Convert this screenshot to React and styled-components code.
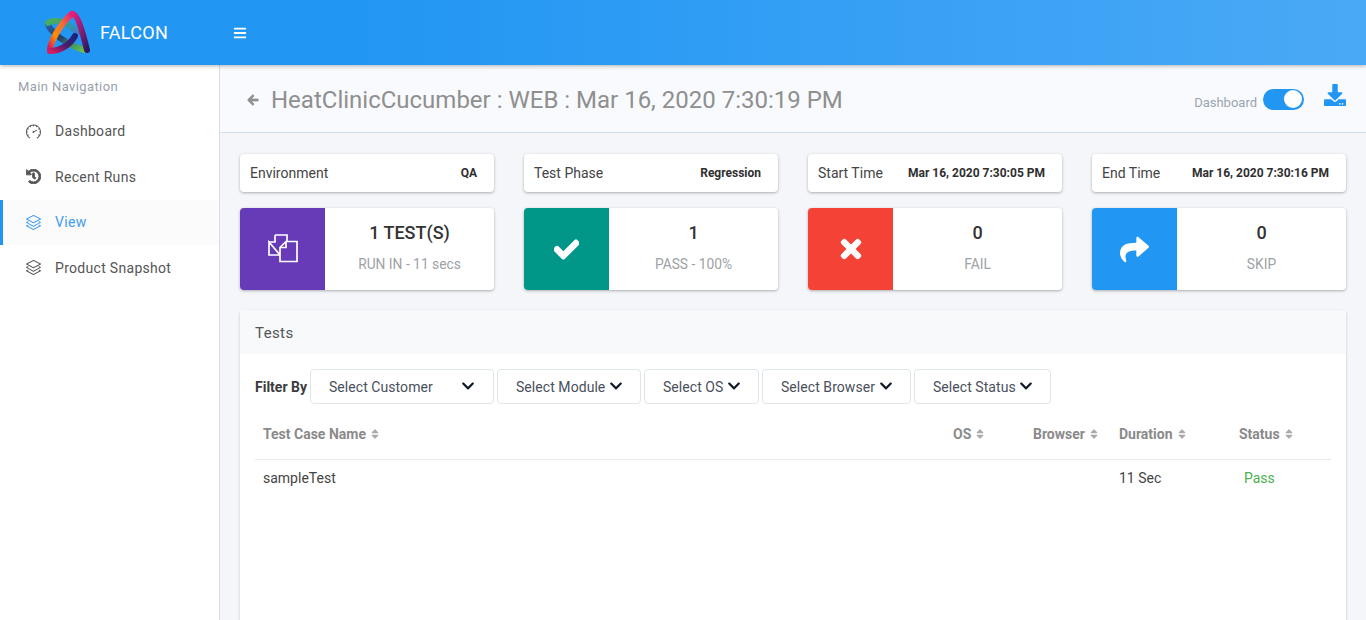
import React from "react";
import styled, { createGlobalStyle } from "styled-components";
import { FaArrowLeft, FaBars, FaCheck, FaChevronDown, FaDownload, FaHistory, FaShare, FaSort, FaTimes } from "react-icons/fa";
import { SlLayers, SlSpeedometer } from "react-icons/sl";

const GlobalStyle = createGlobalStyle`
  html, body { margin: 0; height: 100%; overflow: hidden; }
  body { font-family: Roboto, "Liberation Sans", sans-serif; background: #f4f6fa; color: #3a3a3a; }
  * { box-sizing: border-box; }
`;

const Page = styled.div`
  height: 620px;
  display: flex;
  flex-direction: column;
  overflow: hidden;
`;

const Header = styled.header`
  height: 65px;
  flex: none;
  display: flex;
  align-items: center;
  position: relative;
  z-index: 2;
  color: #fff;
  background: linear-gradient(90deg, #2196f3 0%, #2196f3 25%, #4aa9f6 100%);
  box-shadow: 0 1px 4px rgba(0, 0, 0, 0.3);
`;

const Brand = styled.div`
  width: 233px;
  padding-left: 44px;
  display: flex;
  align-items: center;
  gap: 10px;
  font-size: 18px;
  letter-spacing: 0.3px;
`;

const Body = styled.div`
  flex: 1;
  display: flex;
  min-height: 0;
`;

const Sidebar = styled.aside`
  width: 220px;
  flex: none;
  background: #fff;
  border-right: 1px solid #d8dde3;
  padding-top: 14px;
`;

const NavTitle = styled.div`
  font-size: 13px;
  line-height: 16px;
  padding-left: 18px;
  margin-bottom: 13.5px;
  color: #9aa1ab;
  letter-spacing: 0.4px;
`;

const NavItem = styled.div`
  height: 45.5px;
  display: flex;
  align-items: center;
  gap: 14px;
  padding-left: ${(p) => (p.$active ? "23px" : "26px")};
  font-size: 14px;
  letter-spacing: 0.3px;
  color: ${(p) => (p.$active ? "#3f9bf0" : "#555")};
  background: ${(p) => (p.$active ? "#fbfbfc" : "transparent")};
  border-left: ${(p) => (p.$active ? "3px solid #2196f3" : "none")};
  svg { width: 15px; height: 15px; flex: none; }
`;

const HistoryIcon = styled(FaHistory)`
  stroke: currentColor;
  stroke-width: 30px;
`;

const Main = styled.main`
  flex: 1;
  min-width: 0;
`;

const TitleBar = styled.div`
  height: 68px;
  display: flex;
  align-items: center;
  padding: 0 20px 0 27px;
  background: #f9fafd;
  border-bottom: 1px solid #d3deea;
`;

const Title = styled.h1`
  flex: 1;
  margin: 2px 0 0;
  display: flex;
  align-items: center;
  gap: 12px;
  font-size: 24px;
  font-weight: 400;
  color: #8f8f8f;
  svg { width: 12px; height: 12px; stroke: currentColor; stroke-width: 40px; }
`;

const ToggleLabel = styled.span`
  font-size: 13px;
  color: #9aa5ae;
  margin: 7px 6px 0 0;
`;

const Toggle = styled.span`
  width: 41px;
  height: 21px;
  margin-top: 1px;
  border-radius: 11px;
  background: #2196f3;
  display: flex;
  justify-content: flex-end;
  padding: 1.5px 2px;
  span { width: 18px; height: 18px; border-radius: 50%; background: #fff; }
`;

const DownloadLink = styled.span`
  margin: -7px 0 0 20px;
  color: #2196f3;
  display: flex;
  svg { width: 22px; height: 22px; }
`;

const Content = styled.div`
  padding: 21px 20px 0;
`;

const CardGrid = styled.div`
  display: grid;
  grid-template-columns: repeat(4, 254px);
  column-gap: 30px;
  row-gap: 16px;
  margin-bottom: 20px;
`;

const InfoCard = styled.div`
  height: 38px;
  display: flex;
  align-items: center;
  justify-content: space-between;
  padding: 0 17px 0 10px;
  background: #fff;
  border-radius: 4px;
  box-shadow: 0 1px 3px rgba(0, 0, 0, 0.3);
  font-size: 14px;
  color: #444;
  b { font-size: 12px; font-weight: 700; color: #2f2f2f; }
`;

const StatCard = styled.div`
  height: 82px;
  display: flex;
  background: #fff;
  border-radius: 4px;
  overflow: hidden;
  box-shadow: 0 1px 3px rgba(0, 0, 0, 0.3);
`;

const StatIcon = styled.div`
  width: 85px;
  flex: none;
  display: flex;
  align-items: center;
  justify-content: center;
  color: #fff;
  background: ${(p) => p.$color};
`;

const BoldCheck = styled(FaCheck)`
  stroke: currentColor;
  stroke-width: 30px;
`;

const BoldTimes = styled(FaTimes)`
  stroke: currentColor;
  stroke-width: 20px;
`;

const StatText = styled.div`
  flex: 1;
  display: flex;
  flex-direction: column;
  align-items: center;
  padding-top: 14px;
`;

const StatValue = styled.div`
  font-size: 18px;
  line-height: 22px;
  font-weight: 500;
  color: #333;
`;

const StatLabel = styled.div`
  margin-top: 11px;
  font-size: 13.8px;
  line-height: 18px;
  color: #9ea2a6;
`;

const Panel = styled.section`
  height: 400px;
  background: #fff;
  border-radius: 4px 4px 0 0;
  box-shadow: 0 1px 3px rgba(0, 0, 0, 0.2);
`;

const PanelHead = styled.div`
  height: 44px;
  padding: 2px 0 0 15px;
  display: flex;
  align-items: center;
  background: #f8f9fb;
  font-size: 15px;
  color: #555;
  letter-spacing: 0.4px;
`;

const PanelBody = styled.div`
  padding: 15px 15px 0;
`;

const FilterRow = styled.div`
  display: flex;
  align-items: center;
  gap: 3px;
`;

const FilterLabel = styled.b`
  font-size: 14px;
  font-weight: 700;
  color: #3c3c3c;
`;

const Select = styled.div`
  width: ${(p) => p.$width}px;
  height: 35px;
  display: flex;
  align-items: center;
  justify-content: space-between;
  padding: 0 ${(p) => (p.$wide ? 18 : 17)}px 0 18px;
  border: 1px solid #dfe6ea;
  border-radius: 4px;
  background: #fff;
  font-size: 14px;
  letter-spacing: 0.06px;
  color: #4a4f5c;
  svg { width: 14px; height: 14px; color: #111827; margin-top: -2px; }
`;

const Table = styled.div`
  margin-top: 10px;
`;

const Row = styled.div`
  display: grid;
  grid-template-columns: 690px 80px 86px 120px 92px;
  padding: 0 0 ${(p) => p.$padBottom || 0}px 8px;
  align-items: center;
  height: ${(p) => p.$height}px;
  font-size: 14px;
  border-bottom: ${(p) => (p.$head ? "1px solid #e6eaec" : "none")};
`;

const HeadCell = styled.div`
  display: flex;
  align-items: center;
  gap: 4px;
  font-size: 14px;
  font-weight: 700;
  color: #8a8a8a;
  svg { width: 10px; height: 12px; color: #aaa; }
`;

const Cell = styled.div`
  color: ${(p) => p.$color || "#444"};
  padding-left: ${(p) => p.$pad || 0}px;
`;

const Logo = () => (
  <svg width="46" height="46" viewBox="0 0 46 46" fill="none" strokeWidth="6" strokeLinecap="round">
    <defs>
      <linearGradient id="a" x1="0" y1="0" x2="1" y2="1">
        <stop offset="0" stopColor="#e91e7b" />
        <stop offset="0.5" stopColor="#8e1f78" />
        <stop offset="1" stopColor="#2a1a5e" />
      </linearGradient>
      <linearGradient id="b" x1="0" y1="1" x2="1" y2="0">
        <stop offset="0" stopColor="#d81b60" />
        <stop offset="0.3" stopColor="#ff8f00" />
        <stop offset="0.65" stopColor="#ef6c3a" />
        <stop offset="1" stopColor="#e91e7b" />
      </linearGradient>
      <linearGradient id="c" x1="0" y1="0" x2="1" y2="1">
        <stop offset="0" stopColor="#4caf50" />
        <stop offset="0.5" stopColor="#2f9aa8" />
        <stop offset="1" stopColor="#3f7fc5" />
      </linearGradient>
      <linearGradient id="d" x1="0" y1="1" x2="1" y2="0">
        <stop offset="0" stopColor="#d81b60" />
        <stop offset="0.5" stopColor="#4a1b6e" />
        <stop offset="1" stopColor="#1a237e" />
      </linearGradient>
      <linearGradient id="e" x1="0" y1="0" x2="1" y2="1">
        <stop offset="0" stopColor="#2b5c9e" />
        <stop offset="0.45" stopColor="#23406e" />
        <stop offset="0.7" stopColor="#3a8f6a" />
        <stop offset="1" stopColor="#6cc24a" />
      </linearGradient>
    </defs>
    <path d="M4 14 C6 22 24 36 41 40" stroke="url(#e)" />
    <path d="M4 13 C12 8 25 13 33 23" stroke="url(#c)" />
    <path d="M28 4 C20 10 8 27 6 39" stroke="url(#b)" />
    <path d="M6 41 C16 41 26 35 31 26" stroke="url(#d)" />
    <path d="M28 4 C33 3 38 20 43 40" stroke="url(#a)" />
  </svg>
);

const FilesIcon = () => (
  <svg width="30" height="30" viewBox="0 0 30 30" fill="none" stroke="currentColor" strokeWidth="1.7">
    <path d="M7 1H19V8M12 21H1V8Z" />
    <path d="M7 1V8H1" />
    <path d="M18 7.5H29V27.5H12V13.5Z" fill="#673ab7" />
    <path d="M18 7.5V13.5H12" />
  </svg>
);

const infos = [
  { label: "Environment", value: "QA" },
  { label: "Test Phase", value: "Regression" },
  { label: "Start Time", value: "Mar 16, 2020 7:30:05 PM" },
  { label: "End Time", value: "Mar 16, 2020 7:30:16 PM" },
];

const stats = [
  { color: "#673ab7", icon: <FilesIcon />, value: "1 TEST(S)", label: "RUN IN - 11 secs" },
  { color: "#009688", icon: <BoldCheck size={25} />, value: "1", label: "PASS - 100%" },
  { color: "#f44336", icon: <BoldTimes size={28} />, value: "0", label: "FAIL" },
  { color: "#2196f3", icon: <FaShare size={29} />, value: "0", label: "SKIP" },
];

const selects = [
  { label: "Select Customer", width: 184, wide: true },
  { label: "Select Module", width: 144 },
  { label: "Select OS", width: 115 },
  { label: "Select Browser", width: 149 },
  { label: "Select Status", width: 137 },
];

const columns = ["Test Case Name", "OS", "Browser", "Duration", "Status"];

const App = () => {
  return (
    <Page>
      <GlobalStyle />
      <Header>
        <Brand>
          <Logo />
          FALCON
        </Brand>
        <FaBars size={14} />
      </Header>
      <Body>
        <Sidebar>
          <NavTitle>Main Navigation</NavTitle>
          <NavItem><SlSpeedometer />Dashboard</NavItem>
          <NavItem><HistoryIcon />Recent Runs</NavItem>
          <NavItem $active><SlLayers />View</NavItem>
          <NavItem><SlLayers />Product Snapshot</NavItem>
        </Sidebar>
        <Main>
          <TitleBar>
            <Title>
              <FaArrowLeft />
              HeatClinicCucumber : WEB : Mar 16, 2020 7:30:19 PM
            </Title>
            <ToggleLabel>Dashboard</ToggleLabel>
            <Toggle><span /></Toggle>
            <DownloadLink><FaDownload /></DownloadLink>
          </TitleBar>
          <Content>
            <CardGrid>
              {infos.map((info) => (
                <InfoCard key={info.label}>
                  {info.label}
                  <b>{info.value}</b>
                </InfoCard>
              ))}
              {stats.map((stat) => (
                <StatCard key={stat.label}>
                  <StatIcon $color={stat.color}>{stat.icon}</StatIcon>
                  <StatText>
                    <StatValue>{stat.value}</StatValue>
                    <StatLabel>{stat.label}</StatLabel>
                  </StatText>
                </StatCard>
              ))}
            </CardGrid>
            <Panel>
              <PanelHead>Tests</PanelHead>
              <PanelBody>
                <FilterRow>
                  <FilterLabel>Filter By</FilterLabel>
                  {selects.map((select) => (
                    <Select key={select.label} $width={select.width} $wide={select.wide}>
                      {select.label}
                      <FaChevronDown />
                    </Select>
                  ))}
                </FilterRow>
                <Table>
                  <Row $head $height={46} $padBottom={6}>
                    {columns.map((column) => (
                      <HeadCell key={column}>{column}<FaSort /></HeadCell>
                    ))}
                  </Row>
                  <Row $height={35}>
                    <Cell>sampleTest</Cell>
                    <Cell />
                    <Cell />
                    <Cell>11 Sec</Cell>
                    <Cell $color="#4caf50" $pad={5}>Pass</Cell>
                  </Row>
                </Table>
              </PanelBody>
            </Panel>
          </Content>
        </Main>
      </Body>
    </Page>
  );
};

export default App;
